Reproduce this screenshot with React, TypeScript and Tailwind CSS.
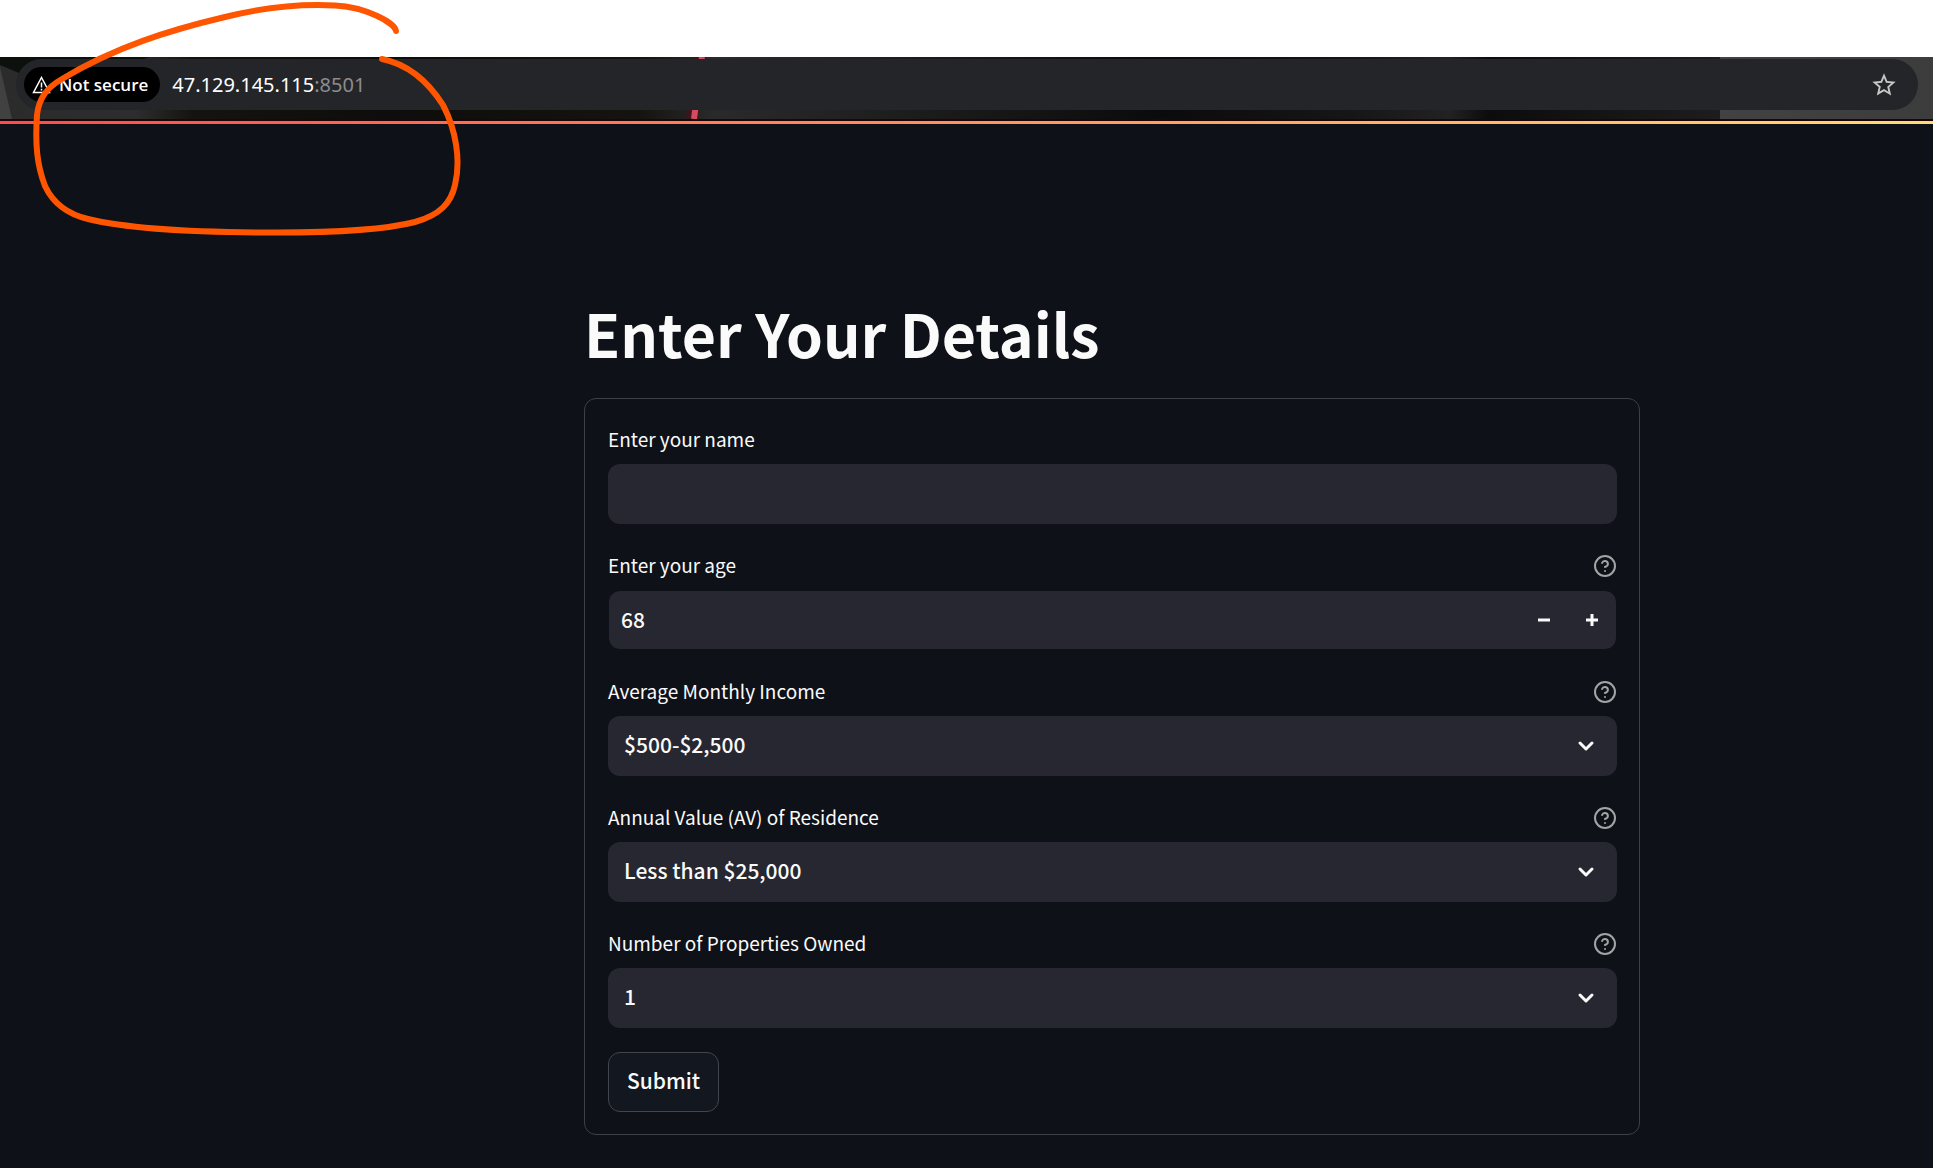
import React, { useState } from "react";
import type { ReactNode } from "react";

const controlClass =
  "h-[60px] w-full rounded-xl bg-[#262730] pb-[3px] text-[21px] font-medium text-[#fafafa] outline-none";

function HelpButton({ label }: { label: string }) {
  return (
    <button type="button" aria-label={"Help: " + label} className="text-[#a3a4a6]">
      <svg width="24" height="24" viewBox="0 0 24 24" fill="none" stroke="currentColor" strokeWidth="2" strokeLinecap="round" strokeLinejoin="round">
        <circle cx="12" cy="12" r="10" />
        <path d="M9.09 9a3 3 0 0 1 5.83 1c0 2-3 3-3 3" />
        <path d="M12 17h.01" />
      </svg>
    </button>
  );
}

function Field({ id, label, help, children }: { id: string; label: string; help?: boolean; children: ReactNode }) {
  return (
    <div className="flex flex-col gap-1.5">
      <div className="flex h-9 items-center justify-between">
        <label htmlFor={id} className="self-start text-[19px] leading-[34px]">
          {label}
        </label>
        {help && <HelpButton label={label} />}
      </div>
      {children}
    </div>
  );
}

function SelectField({ id, label, options }: { id: string; label: string; options: string[] }) {
  return (
    <Field id={id} label={label} help>
      <div className="relative flex">
        <select id={id} className={controlClass + " appearance-none px-4"}>
          {options.map((option) => (
            <option key={option}>{option}</option>
          ))}
        </select>
        <svg className="pointer-events-none absolute top-[18px] right-[19px]" width="24" height="24" viewBox="0 0 24 24" fill="none" stroke="#fafafa" strokeWidth="3" strokeLinecap="round" strokeLinejoin="round">
          <path d="M6 9l6 6 6-6" />
        </svg>
      </div>
    </Field>
  );
}

function AddressBar() {
  return (
    <header className="relative h-[62px] overflow-hidden bg-[linear-gradient(90deg,#2b2b2b_0%,#2d2d2d_7%,#14130f_10%,#0e0d0b_20%,#14130f_33%,#2a2a2a_37%,#161616_52%,#0b0b0b_60%,#161616_70%,#222222_75%,#0c0c0c_77%,#1d1d1d_89%,#424242_89%,#3c3c3c_100%)] pt-0.5">
      <svg className="absolute inset-0" width="100%" height="62" aria-hidden="true">
        <path d="M0 0H150L60 28L19 16L0 8Z" fill="#0d110d" />
        <path d="M0 10L12 62H0Z" fill="#414141" />
        <path d="M700 0L692 62" stroke="#5a0a14" strokeWidth="12" opacity=".5" />
        <path d="M702 0L694 62" stroke="#d34b60" strokeWidth="6" />
      </svg>
      <div className="relative mr-[15px] ml-4 flex h-[51px] items-center rounded-full bg-[#242529] pr-5 pl-2">
        <button type="button" className="flex h-[35px] items-center gap-2 rounded-full bg-black pr-3 pl-2 font-['Open_Sans'] text-[17px] font-semibold text-white">
          <svg width="19" height="18" viewBox="0 0 19 18" fill="none" stroke="#fff" strokeWidth="1.5">
            <path d="M9.5 1.5L17.5 16.5H1.5Z" />
            <path d="M9.5 6.5V11.5M9.5 12.8V14.6" />
          </svg>
          <span>Not secure</span>
        </button>
        <p className="ml-3 flex-1 font-['Noto_Sans'] text-[20px] text-white">
          47.129.145.115<span className="text-[#8b8c8e]">:8501</span>
        </p>
        <button type="button" aria-label="Bookmark this tab" className="text-[#c7c7c7]">
          <svg width="28" height="28" viewBox="0 0 24 24" fill="currentColor">
            <path d="M22 9.24l-7.19-.62L12 2 9.19 8.63 2 9.24l5.46 4.73L5.82 21 12 17.27 18.18 21l-1.63-7.03L22 9.24zM12 15.4l-3.76 2.27 1-4.28-3.32-2.88 4.38-.38L12 6.1l1.71 4.04 4.38.38-3.32 2.88 1 4.28L12 15.4z" />
          </svg>
        </button>
      </div>
    </header>
  );
}

export default function App() {
  const [name, setName] = useState("");
  const [age, setAge] = useState(68);

  return (
    <div className="relative min-h-screen bg-[#0e1117] pt-[57px] font-['Noto_Sans_CJK_SC',sans-serif] text-[#fafafa] shadow-[inset_0_57px_0_#fff]">
      <AddressBar />
      <div className="h-[5px] border-t-2 border-[#200508] bg-[linear-gradient(90deg,#ff4b4b,#ffdb74)]" />

      <main className="pt-[169px] pb-6 pl-[291px]">
        <div className="mx-auto max-w-[1056px]">
          <h1 className="text-[59px] leading-[80px] font-bold">Enter Your Details</h1>
          <form className="mt-[25px] flex flex-col gap-6 rounded-xl border border-[#3d4044] pt-[23px] pr-[22px] pb-[22px] pl-[23px]" onSubmit={(e) => e.preventDefault()}>
            <Field id="name" label="Enter your name">
              <input id="name" type="text" value={name} onChange={(e) => setName(e.target.value)} className={controlClass + " px-4"} />
            </Field>
            <Field id="age" label="Enter your age" help>
              <div className="flex h-[60px] items-center rounded-xl border border-[#0e1117] bg-[#262730]">
                <input id="age" type="text" inputMode="numeric" value={age} onChange={(e) => setAge(Number(e.target.value) || 0)} className="h-full min-w-0 flex-1 bg-transparent px-3 pb-[3px] text-[21px] font-medium outline-none" />
                <button type="button" aria-label="Decrease age" className="flex h-full w-12 items-center justify-center" onClick={() => setAge(age - 1)}>
                  <svg width="12" height="12" viewBox="0 0 12 12" stroke="#fafafa" strokeWidth="3">
                    <path d="M0 6h12" />
                  </svg>
                </button>
                <button type="button" aria-label="Increase age" className="flex h-full w-12 items-center justify-center" onClick={() => setAge(age + 1)}>
                  <svg width="12" height="12" viewBox="0 0 12 12" stroke="#fafafa" strokeWidth="3">
                    <path d="M0 6h12M6 0v12" />
                  </svg>
                </button>
              </div>
            </Field>
            <SelectField id="income" label="Average Monthly Income" options={["$500-$2,500"]} />
            <SelectField id="residence" label="Annual Value (AV) of Residence" options={["Less than $25,000"]} />
            <SelectField id="properties" label="Number of Properties Owned" options={["1"]} />
            <button type="submit" className="h-[60px] self-start rounded-xl border border-[#42454b] bg-[#131720] px-[18px] pb-[3px] text-[21px] font-medium">
              Submit
            </button>
          </form>
        </div>
      </main>

      <svg className="pointer-events-none absolute top-0 left-0" width="480" height="250" viewBox="0 0 480 250" fill="none" stroke="#ff5500" strokeWidth="6" strokeLinecap="round" strokeLinejoin="round" aria-hidden="true">
        <path d="M396 31C395 23 366 7 335 5.500C305 4 265 7 225 17C170 30 115 47 62 79C48 87 39 97 37 115C35 145 37 165 45 186C53 203 67 214 88 219C125 228 190 232 260 232.500C320 233 380 231 415 222C440 215 451 203 455 185C461 160 456 130 443 105C427 80 407 64 382 59" />
      </svg>
    </div>
  );
}
